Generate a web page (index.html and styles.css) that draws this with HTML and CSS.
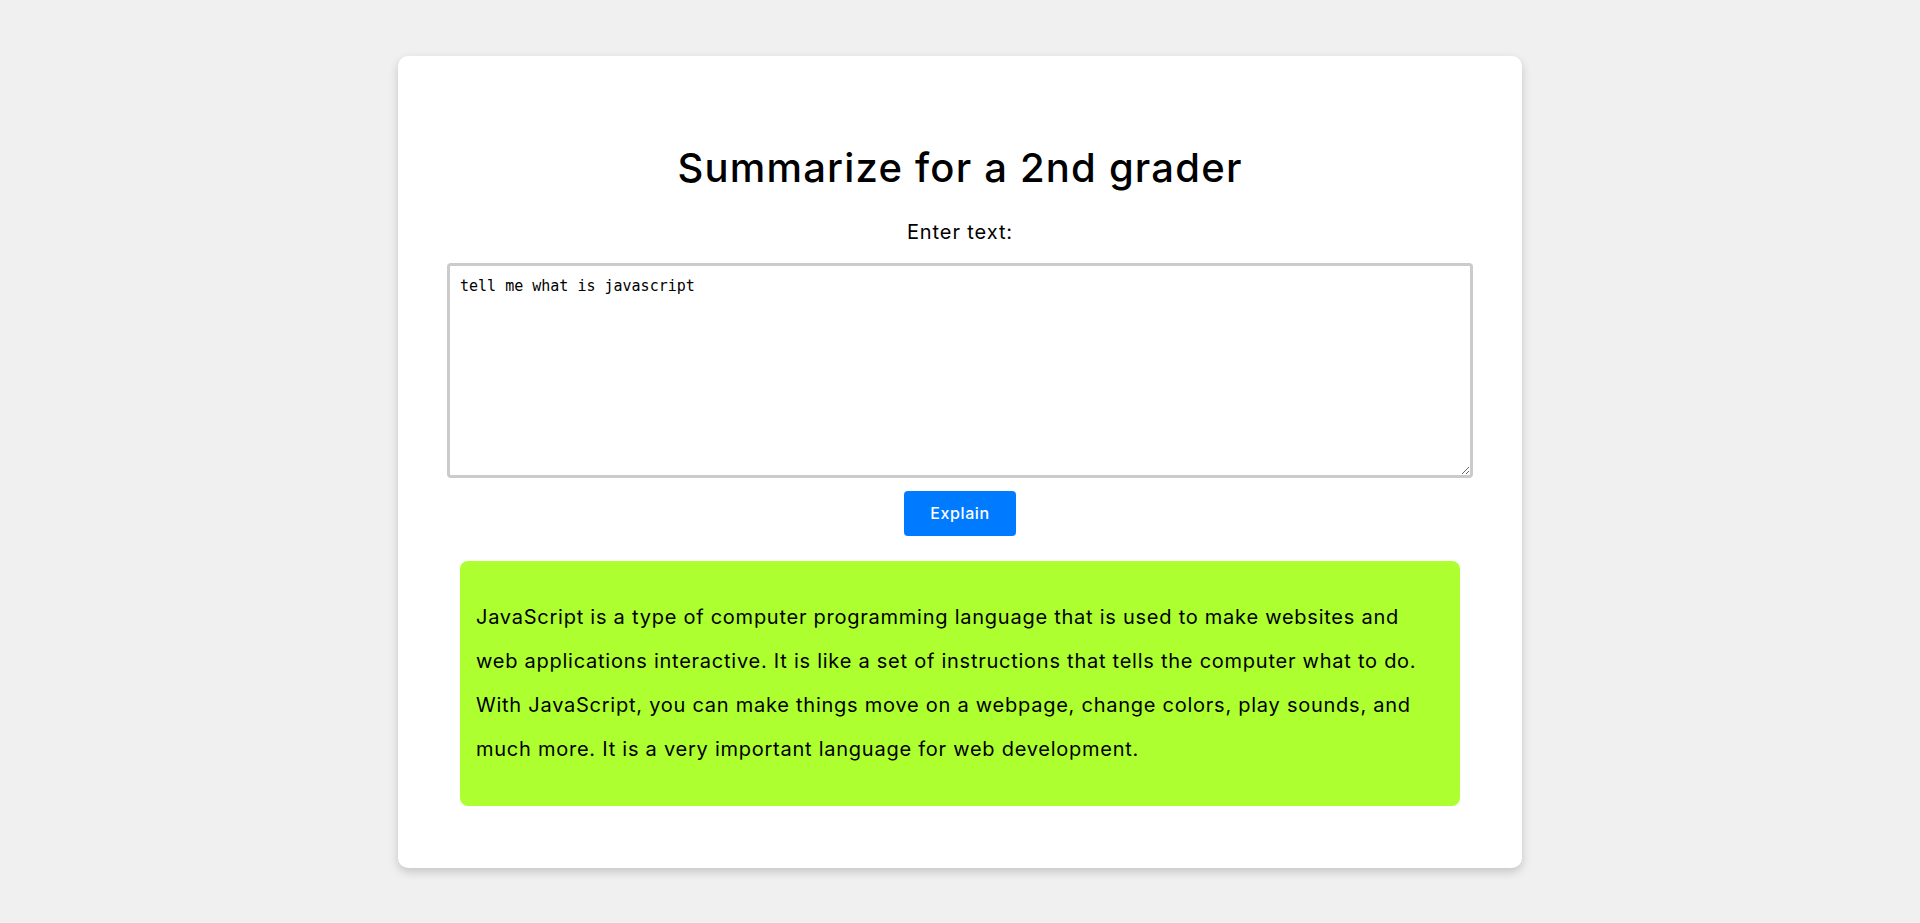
FILE: index.html
```html
<!DOCTYPE html>
<html lang="en">
<head>
<meta charset="utf-8">
<title>Summarize for a 2nd grader</title>
<link rel="stylesheet" href="styles.css">
</head>
<body>
<main class="card">
  <h1 class="title">Summarize for a 2nd grader</h1>
  <label class="label" for="input">Enter text:</label>
  <textarea class="input" id="input">tell me what is javascript</textarea>
  <button class="btn" type="button">Explain</button>
  <div class="result">
    <p class="result-text">JavaScript is a type of computer programming language that is used to make websites and web applications interactive. It is like a set of instructions that tells the computer what to do. With JavaScript, you can make things move on a webpage, change colors, play sounds, and much more. It is a very important language for web development.</p>
  </div>
</main>
</body>
</html>
```
FILE: styles.css
```css
html, body {
  margin: 0;
  padding: 0;
}
body {
  background: #f0f0f0;
  font-family: "Inter", "Liberation Sans", sans-serif;
  color: #000;
  min-height: 100vh;
  display: flex;
  align-items: center;
  justify-content: center;
}
.card {
  width: 1124px;
  box-sizing: border-box;
  background: #fff;
  border-radius: 10px;
  box-shadow: 0 4px 10px rgba(0, 0, 0, 0.18);
  padding: 88px 49px 62px;
  display: flex;
  flex-direction: column;
  align-items: center;
}
.title {
  margin: 0 0 28px;
  font-size: 40px;
  line-height: 48px;
  font-weight: 500;
  letter-spacing: 1.2px;
  text-align: center;
}
.label {
  display: block;
  font-size: 20px;
  line-height: 24px;
  letter-spacing: 0.9px;
  margin-bottom: 19px;
}
.input {
  width: 100%;
  height: 215px;
  box-sizing: border-box;
  border: 3px solid #cbcbcb;
  border-radius: 4px;
  padding: 11px 10px 9px;
  font-family: "DejaVu Sans Mono", monospace;
  font-size: 15px;
  line-height: 18px;
  color: #000;
  background: #fff;
  resize: both;
  margin: 0;
}
.btn {
  margin-top: 13px;
  height: 45px;
  padding: 0 26px;
  border: none;
  border-radius: 4px;
  background: #007bff;
  color: #fff;
  font-family: "Inter", "Liberation Sans", sans-serif;
  font-size: 16px;
  font-weight: 500;
  letter-spacing: 0.6px;
}
.result {
  margin-top: 25px;
  width: 1000px;
  box-sizing: border-box;
  background: #adff2f;
  border-radius: 8px;
  padding: 34px 30px 35px 16px;
}
.result-text {
  margin: 0;
  font-size: 20px;
  line-height: 44px;
  letter-spacing: 0.75px;
}
```
